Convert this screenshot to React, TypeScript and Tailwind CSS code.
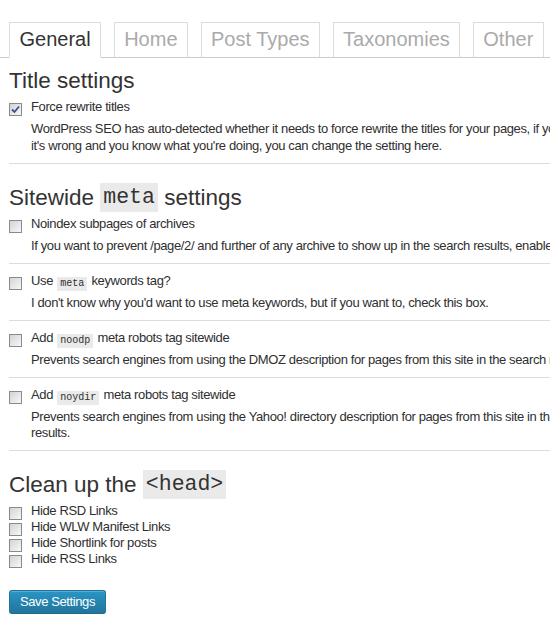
import React from "react";

const tabs = ["General", "Home", "Post Types", "Taxonomies", "Other"];

const Checkbox: React.FC<{ checked?: boolean }> = ({ checked = false }) => (
  <div className="mt-[4px] flex h-[13px] w-[13px] shrink-0 items-center justify-center border border-[#8a8a8a] bg-gradient-to-br from-[#d4d4d4] to-[#f7f7f7]">
    {checked && (
      <svg width="9" height="9" viewBox="0 0 9 9">
        <path d="M1 4.5 L3.5 7 L8 1.5" fill="none" stroke="#3b4f8f" strokeWidth="1.8" />
      </svg>
    )}
  </div>
);

const Code: React.FC<{ children: React.ReactNode }> = ({ children }) => (
  <span className="mx-[1px] inline-block bg-[#eaeaea] px-[3px] align-[-1px] font-['Liberation_Mono',monospace] text-[10px] leading-[14px] tracking-normal">
    {children}
  </span>
);

const BigCode: React.FC<{ children: React.ReactNode }> = ({ children }) => (
  <span className="inline-block bg-[#eaeaea] px-[3px] align-top font-['Liberation_Mono',monospace] text-[21.5px] leading-[29px]">
    {children}
  </span>
);

const Heading: React.FC<{ children: React.ReactNode; top: string }> = ({ children, top }) => (
  <h2 className={`${top} mb-[4px] whitespace-nowrap text-[22.5px] leading-[29px] font-normal tracking-normal text-[#333]`}>
    {children}
  </h2>
);

const Option: React.FC<{
  label: React.ReactNode;
  desc?: React.ReactNode;
  checked?: boolean;
}> = ({ label, desc, checked }) => (
  <div>
    <div className="flex h-[16px] items-start">
      <Checkbox checked={checked} />
      <div className="ml-[9px] whitespace-nowrap leading-[16px]">{label}</div>
    </div>
    {desc && (
      <div className="mt-[6px] mb-[8.5px] pl-[22px] whitespace-nowrap leading-[16.5px]">{desc}</div>
    )}
  </div>
);

const Rule: React.FC = () => <div className="h-px w-[1000px] bg-[#dcdcdc]" />;

export default function App() {
  return (
    <div className="h-[631px] w-[550px] overflow-hidden bg-white font-['Liberation_Sans',Arial,sans-serif] text-[13px] tracking-[-0.38px] text-[#2f2f2f]">
      <div className="flex border-b border-[#cccccc] pl-[9px] pt-[22px] tracking-normal">
        {tabs.map((tab, i) => (
          <div
            key={tab}
            className={`-mb-px mr-[12.5px] border border-[#dcdcdc] bg-white px-[9.5px] pt-[4px] pb-[6px] text-[20px] leading-[24px] whitespace-nowrap ${
              i === 0 ? "border-b-white text-[#333]" : "border-b-[#cccccc] text-[#aaaaaa]"
            }`}
          >
            {tab}
          </div>
        ))}
      </div>

      <div className="w-[1000px] pl-[9px]">
        <Heading top="mt-[8px]">Title settings</Heading>
        <Option
          checked
          label="Force rewrite titles"
          desc={
            <>
              WordPress SEO has auto-detected whether it needs to force rewrite the titles for your pages, if you think
              <br />
              it's wrong and you know what you're doing, you can change the setting here.
            </>
          }
        />
        <Rule />

        <Heading top="mt-[19px]">
          Sitewide <BigCode>meta</BigCode> settings
        </Heading>
        <Option
          label="Noindex subpages of archives"
          desc="If you want to prevent /page/2/ and further of any archive to show up in the search results, enable this."
        />
        <Rule />
        <div className="pt-[9px]">
          <Option
            label={
              <>
                Use <Code>meta</Code> keywords tag?
              </>
            }
            desc="I don't know why you'd want to use meta keywords, but if you want to, check this box."
          />
        </div>
        <Rule />
        <div className="pt-[9px]">
          <Option
            label={
              <>
                Add <Code>noodp</Code> meta robots tag sitewide
              </>
            }
            desc="Prevents search engines from using the DMOZ description for pages from this site in the search results."
          />
        </div>
        <Rule />
        <div className="pt-[9px]">
          <Option
            label={
              <>
                Add <Code>noydir</Code> meta robots tag sitewide
              </>
            }
            desc={
              <>
                Prevents search engines from using the Yahoo! directory description for pages from this site in the search
                <br />
                results.
              </>
            }
          />
        </div>
        <Rule />

        <Heading top="mt-[19px]">
          Clean up the <BigCode>&lt;head&gt;</BigCode>
        </Heading>
        <Option label="Hide RSD Links" />
        <Option label="Hide WLW Manifest Links" />
        <Option label="Hide Shortlink for posts" />
        <Option label="Hide RSS Links" />

        <button className="mt-[23px] h-[24px] rounded-[3px] border border-[#21759b] border-b-[#1e6a8d] bg-gradient-to-b from-[#2a95c5] to-[#21759b] px-[10px] pb-px text-[13px] leading-[22px] tracking-[-0.4px] text-white shadow-[inset_0_1px_0_rgba(120,200,230,0.5)]">
          Save Settings
        </button>
      </div>
    </div>
  );
}
